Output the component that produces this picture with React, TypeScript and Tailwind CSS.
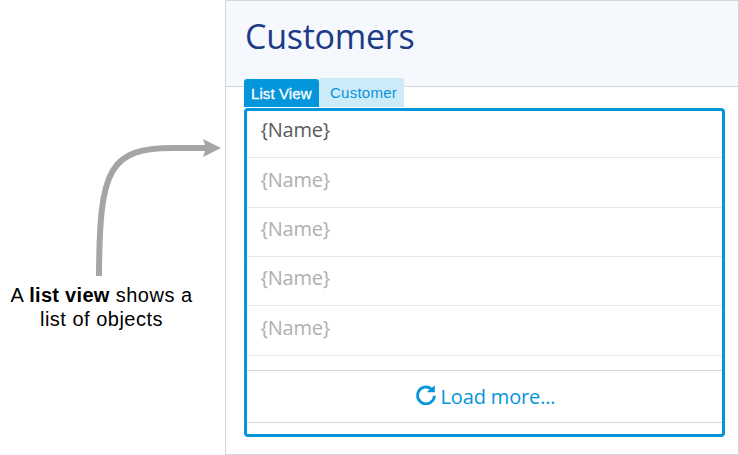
const rows = [
  { height: 'h-[47px]', text: 'text-[#5c5c5c]', pad: 'pb-[9px]' },
  { height: 'h-[50px]', text: 'text-[#b0b0b0]', pad: 'pb-[5px]' },
  { height: 'h-[49px]', text: 'text-[#b0b0b0]', pad: 'pb-[6px]' },
  { height: 'h-[49px]', text: 'text-[#b0b0b0]', pad: 'pb-[6px]' },
  { height: 'h-[50px]', text: 'text-[#b0b0b0]', pad: 'pb-[5px]' },
];

function Callout() {
  return (
    <aside className="w-[225px] shrink-0">
      <svg className="block" width="225" height="283" viewBox="0 0 225 283">
        <path
          d="M99 276C99.500 168 109 147.500 175 148H208"
          fill="none"
          stroke="#a5a5a5"
          strokeWidth="6"
        />
        <path d="M203 139L221 148L203 157L206 148Z" fill="#a5a5a5" />
      </svg>
      <p className="w-[203px] text-center font-['Liberation_Sans',Arial,sans-serif] text-[20px] leading-6 tracking-[0.5px] text-black">
        A <b className="tracking-[0.3px]">list view</b> shows a
        <br />
        list of objects
      </p>
    </aside>
  );
}

function ReloadIcon() {
  return (
    <svg width="20" height="20" viewBox="0 0 20 20" className="relative -top-[2px] shrink-0">
      <path
        d="M18.400 10.800A8.400 8.400 0 1 1 15.200 3.800"
        fill="none"
        stroke="#0595db"
        strokeWidth="2.800"
      />
      <path d="M18.800 0.300V7.200H11.500L11.500 6.200Z" fill="#0595db" />
    </svg>
  );
}

export default function App() {
  return (
    <main className="flex h-[455px] w-[739px] overflow-hidden bg-white">
      <Callout />
      <section className="relative h-[455px] w-[514px] border border-[#d5d5d5] font-['Open_Sans',sans-serif]">
        <header className="h-[86px] border-b border-[#d5d5d5] bg-[#f5f8fd] pl-[19px]">
          <h1 className="pt-[11px] text-[34px] leading-[48px] tracking-[-0.25px] text-[#1c3a85]">Customers</h1>
        </header>
        <div className="absolute left-[18px] top-[77px] flex h-[30px] items-start font-['Liberation_Sans',Arial,sans-serif] text-[15px]">
          <div className="mt-px h-[28px] w-[75px] rounded-t-[3px] bg-[#0595db] pl-[7px] leading-[29px] tracking-[0.1px] text-white [-webkit-text-stroke:0.3px_white]">
            List View
          </div>
          <div className="h-[29px] w-[85px] rounded-tr-[2px] bg-[#cdeaf8] pl-[11px] leading-[29px] tracking-[0.25px] text-[#0595db]">
            Customer
          </div>
        </div>
        <div className="ml-[18px] mt-[21px] h-[329px] w-[481px] rounded-[4px] border-[3px] border-[#0595db] bg-white">
          <ul>
            {rows.map((row, i) => (
              <li
                key={i}
                className={`flex items-center border-b border-[#e8e8e8] pl-[13.5px] text-[20px] leading-7 tracking-[-0.25px] ${row.height} ${row.text} ${row.pad}`}
              >
                {'{Name}'}
              </li>
            ))}
          </ul>
          <button className="mt-[14px] flex h-[53px] w-full items-center justify-center gap-[5px] border-y border-[#d8d8d8] pl-[2px] text-[20px] tracking-[-0.15px] text-[#0595db]">
            <ReloadIcon />
            <span>Load more...</span>
          </button>
        </div>
      </section>
    </main>
  );
}
